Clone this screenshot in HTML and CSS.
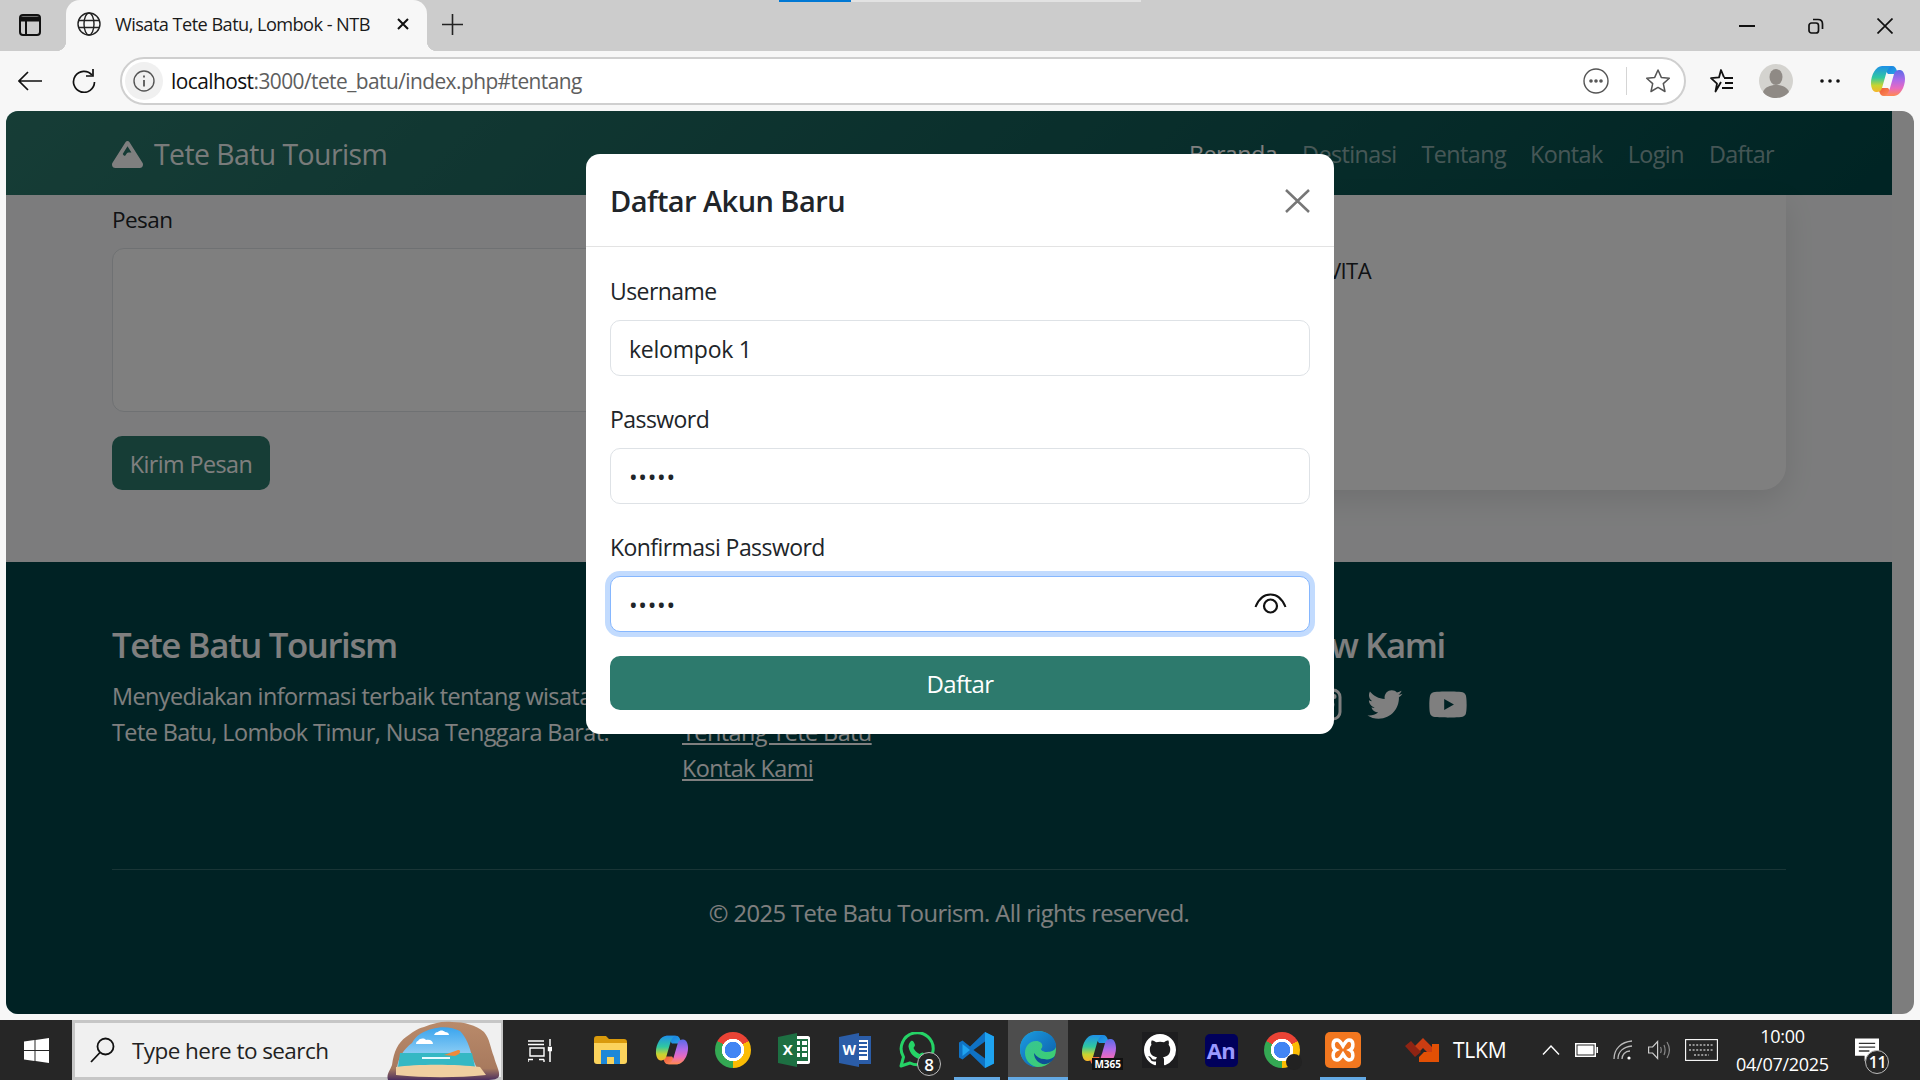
FILE: index.html
```html
<!DOCTYPE html>
<html lang="id">
<head>
<meta charset="utf-8">
<title>Wisata Tete Batu, Lombok - NTB</title>
<link rel="stylesheet" href="styles.css">
</head>
<body>
<svg class="defs" width="0" height="0" aria-hidden="true">
  <defs>
    <linearGradient id="cpL" x1="0" y1="0" x2="0" y2="1"><stop offset="0" stop-color="#1e90e8"/><stop offset=".45" stop-color="#30c8a0"/><stop offset=".75" stop-color="#c8d430"/><stop offset="1" stop-color="#f7b52c"/></linearGradient>
    <linearGradient id="cpR" x1="0" y1="0" x2="0" y2="1"><stop offset="0" stop-color="#5a6be8"/><stop offset=".4" stop-color="#b06ae8"/><stop offset=".7" stop-color="#e86ac0"/><stop offset="1" stop-color="#ff8a50"/></linearGradient>
    <linearGradient id="cpT" x1="0" y1="0" x2="1" y2="1"><stop offset="0" stop-color="#1273de"/><stop offset="1" stop-color="#2fb4e8"/></linearGradient>
    <linearGradient id="cpD" x1="0" y1="0" x2="1" y2="1"><stop offset="0" stop-color="#e8442c"/><stop offset="1" stop-color="#ff9a60"/></linearGradient>
    <linearGradient id="edA" x1="0" y1="0" x2="1" y2="1"><stop offset="0" stop-color="#35c1a0"/><stop offset="1" stop-color="#3ed06a"/></linearGradient>
    <linearGradient id="edB" x1="0" y1="0" x2="1" y2="1"><stop offset="0" stop-color="#1b9de2"/><stop offset="1" stop-color="#0c59a4"/></linearGradient>
    <linearGradient id="sky" x1="0" y1="0" x2="0" y2="1"><stop offset="0" stop-color="#3aa5ee"/><stop offset="1" stop-color="#bfe6f8"/></linearGradient>
    <linearGradient id="cave" x1="0" y1="0" x2="0" y2="1"><stop offset="0" stop-color="#b98a6a"/><stop offset=".8" stop-color="#a87a5e"/><stop offset="1" stop-color="#4b2f5e"/></linearGradient>
    <symbol id="copilot" viewBox="0 0 36 36">
      <path d="M12 3h10c3 0 4 2 5 5l2 7c-1-3-3-4-5-4h-6z" fill="url(#cpT)"/>
      <path d="M24 33H14c-3 0-4-2-5-5l-2-7c1 3 3 4 5 4h6z" fill="url(#cpD)"/>
      <path d="M12 3h10c-3 1-5 4-6 8l-4 14c-1 3-3 4-5 4H6C3 29 1 25 1 20 1 12 6 3 12 3z" fill="url(#cpL)"/>
      <path d="M24 33H14c3-1 5-4 6-8l4-14c1-3 3-4 5-4h1c3 0 5 4 5 9 0 8-5 17-11 17z" fill="url(#cpR)"/>
    </symbol>
  </defs>
</svg>

<header class="tabstrip">
  <span class="progress"><span class="progress-fill"></span></span>
  <span class="tab-side">
    <svg width="22" height="22" viewBox="0 0 22 22" fill="none" stroke="#111" stroke-width="2"><rect x="1" y="1" width="20" height="20" rx="3"/><path d="M1 5h20" stroke-width="5"/><path d="M7 6v15"/></svg>
  </span>
  <div class="tab">
    <svg class="tab-globe" width="24" height="24" viewBox="0 0 24 24" fill="none" stroke="#222" stroke-width="1.4"><circle cx="12" cy="12" r="11"/><ellipse cx="12" cy="12" rx="5" ry="11"/><path d="M1.5 8.5h21M1.5 15.5h21"/></svg>
    <span class="tab-title">Wisata Tete Batu, Lombok - NTB</span>
    <svg class="tab-close" width="14" height="14" viewBox="0 0 14 14" stroke="#111" stroke-width="2"><path d="M2 2l10 10M12 2L2 12"/></svg>
  </div>
  <svg class="tab-plus" width="21" height="21" viewBox="0 0 21 21" stroke="#222" stroke-width="1.6"><path d="M10.5 0v21M0 10.5h21"/></svg>
  <div class="win-controls">
    <svg width="16" height="16" viewBox="0 0 16 16" stroke="#111" stroke-width="2"><path d="M0 8h16"/></svg>
    <svg width="16" height="16" viewBox="0 0 16 16" fill="none" stroke="#111" stroke-width="1.7"><rect x="1" y="5" width="9.500" height="10" rx="2.500"/><path d="M5 1.500h5c3 0 4.500 1.500 4.500 4.500v5"/></svg>
    <svg width="16" height="16" viewBox="0 0 16 16" stroke="#111" stroke-width="1.700"><path d="M0.500 0.500l15 15M15.500 0.500l-15 15"/></svg>
  </div>
</header>

<nav class="toolbar">
  <svg class="tool-back" width="24" height="20" viewBox="0 0 24 20" fill="none" stroke="#111" stroke-width="1.700"><path d="M24 10H1M10 1l-9 9 9 9"/></svg>
  <svg class="tool-reload" width="25" height="24" viewBox="0 0 25 24" fill="none" stroke="#111" stroke-width="1.700"><path d="M20 6a10.500 10.500 0 1 0 2.500 7"/><path d="M21 0v7h-7"/></svg>
  <div class="addressbar">
    <span class="site-info"><svg width="22" height="22" viewBox="0 0 22 22" fill="none" stroke="#555" stroke-width="1.400"><circle cx="11" cy="11" r="10"/><path d="M11 10v6.500M11 5.500v2" stroke-width="1.800"/></svg></span>
    <span class="url"><span class="url-host">localhost</span>:3000/tete_batu/index.php#tentang</span>
    <svg class="addr-more" width="26" height="26" viewBox="0 0 26 26" fill="none" stroke="#555" stroke-width="1.400"><circle cx="13" cy="13" r="12"/><circle cx="8" cy="13" r="1.100" fill="#555"/><circle cx="13" cy="13" r="1.100" fill="#555"/><circle cx="18" cy="13" r="1.100" fill="#555"/></svg>
    <span class="addr-divider"></span>
    <svg class="addr-star" width="26" height="26" viewBox="0 0 26 26" fill="none" stroke="#555" stroke-width="1.500"><path d="M13 2l3.300 7.400 8 .8-6 5.400 1.700 7.900L13 19.400l-7 4.100 1.700-7.900-6-5.400 8-.8z" stroke-linejoin="round"/></svg>
  </div>
  <svg class="tool-fav" width="26" height="26" viewBox="0 0 26 26" fill="none" stroke="#111" stroke-width="1.800"><path d="M13 14l-5.500 9.500 1.500-7.900-6-5.400 8-.8L13 2l3 7.400" stroke-linejoin="round"/><path d="M16 10h9M17 15h8M14 20h11"/></svg>
  <svg class="tool-avatar" width="34" height="34" viewBox="0 0 34 34"><circle cx="17" cy="17" r="17" fill="#d4d3cf"/><ellipse cx="17" cy="13" rx="6.500" ry="8" fill="#8f8a85"/><path d="M4 28c2-5 7-7 13-7s11 2 13 7c-3 4-8 6-13 6s-10-2-13-6z" fill="#8f8a85"/></svg>
  <svg class="tool-dots" width="20" height="4" viewBox="0 0 20 4" fill="#111"><circle cx="2" cy="2" r="1.800"/><circle cx="10" cy="2" r="1.800"/><circle cx="18" cy="2" r="1.800"/></svg>
  <svg class="tool-copilot" width="36" height="36"><use href="#copilot"/></svg>
</nav>

<div class="viewport">
  <div class="page">
    <div class="navbar">
      <a class="brand">
        <svg class="brand-icon" width="31" height="27" viewBox="0 32 512 448" preserveAspectRatio="none"><path fill="#fff" d="M256 32c12.500 0 24.100 6.400 30.800 17L503.400 394.400c5.600 8.900 8.600 19.200 8.600 29.700c0 30.900-25 55.900-55.900 55.900H55.900C25 480 0 455 0 424.100c0-10.500 3-20.800 8.600-29.700L225.200 49c6.600-10.600 18.300-17 30.800-17zm65 192L256 120.400 176.900 246.500l18.300 24.400c6.400 8.500 19.200 8.500 25.600 0l25.600-34.100c6-8.100 15.500-12.800 25.600-12.800h49z"/></svg>
        Tete Batu Tourism
      </a>
      <ul class="nav-links">
        <li class="nav-active">Beranda</li>
        <li>Destinasi</li>
        <li>Tentang</li>
        <li>Kontak</li>
        <li>Login</li>
        <li>Daftar</li>
      </ul>
    </div>

    <main class="contact">
      <form class="contact-form">
        <label class="contact-label">Pesan</label>
        <div class="contact-area"></div>
        <button class="contact-send" type="button">Kirim Pesan</button>
      </form>
      <aside class="contact-card">
        <p class="contact-card-line">VITA</p>
      </aside>
    </main>

    <footer class="footer">
      <div class="footer-grid">
        <div>
          <h3 class="footer-title">Tete Batu Tourism</h3>
          <p class="footer-text">Menyediakan informasi terbaik tentang wisata<br>Tete Batu, Lombok Timur, Nusa Tenggara Barat.</p>
        </div>
        <div>
          <h3 class="footer-title">Link Cepat</h3>
          <ul class="footer-links">
            <li><a>Destinasi Wisata</a></li>
            <li><a>Tentang Tete Batu</a></li>
            <li><a>Kontak Kami</a></li>
          </ul>
        </div>
        <div>
          <h3 class="footer-title">Follow Kami</h3>
          <div class="socials">
            <svg width="37" height="35" viewBox="0 0 320 512" fill="#fff"><path d="M279.140 288l14.220-92.660h-88.910v-60.130c0-25.350 12.420-50.060 52.240-50.060h40.420V6.260S260.430 0 225.360 0c-73.220 0-121.080 44.380-121.080 124.720v70.620H22.890V288h81.390v224h100.170V288z"/></svg>
            <svg width="31" height="35" viewBox="0 0 31 35" fill="none" stroke="#fff" stroke-width="3"><rect x="2" y="3" width="27" height="29" rx="7"/><circle cx="15.500" cy="17.500" r="6.500"/><circle cx="23" cy="9.500" r="1" fill="#fff"/></svg>
            <svg width="36" height="35" viewBox="0 0 512 512" fill="#fff"><path d="M459.370 151.716c.325 4.548.325 9.097.325 13.645 0 138.720-105.583 298.558-298.558 298.558-59.452 0-114.680-17.219-161.137-47.106 8.447.974 16.568 1.299 25.340 1.299 49.055 0 94.213-16.568 130.274-44.832-46.132-.975-84.792-31.188-98.112-72.772 6.498.974 12.995 1.624 19.818 1.624 9.421 0 18.843-1.300 27.614-3.573-48.081-9.747-84.143-51.980-84.143-102.985v-1.299c13.969 7.797 30.214 12.670 47.431 13.319-28.264-18.843-46.781-51.005-46.781-87.391 0-19.492 5.197-37.360 14.294-52.954 51.655 63.675 129.300 105.258 216.365 109.807-1.624-7.797-2.599-15.918-2.599-24.040 0-57.828 46.782-104.934 104.934-104.934 30.213 0 57.502 12.670 76.670 33.137 23.715-4.548 46.456-13.320 66.599-25.340-7.798 24.366-24.366 44.833-46.132 57.827 21.117-2.273 41.584-8.122 60.426-16.243-14.292 20.791-32.161 39.308-52.628 54.253z"/></svg>
            <svg width="40" height="35" viewBox="0 0 576 512" fill="#fff"><path d="M549.655 124.083c-6.281-23.650-24.787-42.276-48.284-48.597C458.781 64 288 64 288 64S117.220 64 74.629 75.486c-23.497 6.322-42.003 24.947-48.284 48.597-11.412 42.867-11.412 132.305-11.412 132.305s0 89.438 11.412 132.305c6.281 23.650 24.787 41.500 48.284 47.821C117.220 448 288 448 288 448s170.780 0 213.371-11.486c23.497-6.321 42.003-24.171 48.284-47.821 11.412-42.867 11.412-132.305 11.412-132.305s0-89.438-11.412-132.305zm-317.510 213.508V175.185l142.739 81.205-142.739 81.201z"/></svg>
          </div>
        </div>
      </div>
      <div class="footer-bottom">© 2025 Tete Batu Tourism. All rights reserved.</div>
    </footer>
  </div>
  <div class="scroll-gutter"></div>

  <div class="backdrop"></div>

  <section class="modal">
    <div class="modal-header">
      <h2 class="modal-title">Daftar Akun Baru</h2>
      <svg class="modal-close" width="25" height="24" viewBox="0 0 25 24" stroke="#777" stroke-width="2.500"><path d="M1 1l23 22M24 1L1 23"/></svg>
    </div>
    <div class="modal-body">
      <div class="field">
        <label class="field-label">Username</label>
        <input class="field-input" type="text" value="kelompok 1">
      </div>
      <div class="field">
        <label class="field-label">Password</label>
        <input class="field-input field-secret" type="password" value="12345">
      </div>
      <div class="field">
        <label class="field-label">Konfirmasi Password</label>
        <div class="field-wrap">
          <input class="field-input field-secret is-focused" type="password" value="12345">
          <svg class="eye" width="33" height="21" viewBox="0 0 33 21" fill="none" stroke="#111" stroke-width="2"><path d="M1.500 14C5 5 10 1.500 16.500 1.500S28 5 31.500 14"/><circle cx="16.500" cy="13" r="6.500" stroke-width="2.200"/></svg>
        </div>
      </div>
      <button class="submit" type="button">Daftar</button>
    </div>
  </section>
</div>

<footer class="taskbar">
  <span class="start"><svg width="25" height="25" viewBox="0 0 25 25" fill="#fff"><path d="M0 3.500l10.500-1.500v10H0zM11.500 2L25 0v12H11.500zM0 13h10.500v10L0 21.500zM11.500 13H25v12l-13.500-2z"/></svg></span>
  <div class="search">
    <svg class="search-icon" width="25" height="26" viewBox="0 0 25 26" fill="none" stroke="#111" stroke-width="1.800"><circle cx="15.500" cy="9.500" r="8"/><path d="M10 15.500L1 25"/></svg>
    <span class="search-text">Type here to search</span>
    <svg class="search-art" width="116" height="59" viewBox="0 0 116 59">
      <path d="M2 59C0 53 4 50 6 44 8 30 12 22 20 16 26 12 30 8 38 6 48 2 56 0 66 1 78 1 90 4 98 11 104 18 104 26 108 36 110 44 114 50 113 55 112 58 108 59 100 59z" fill="url(#cave)"/>
      <path d="M11 48C12 36 18 28 26 22 30 14 38 10 46 8 56 5 66 6 74 10 80 16 84 26 86 36L92 50H11z" fill="url(#sky)"/>
      <path d="M32 20c2-3 6-3 8-1 4-1 7 1 7 4H30c0-2 1-3 2-3zM52 11c2-2 5-2 7 0 2 0 4 1 4 3H48c1-2 2-3 4-3z" fill="#fff"/>
      <path d="M14 32h72l3 14H12z" fill="#35b8c4"/>
      <path d="M10 46c20-3 60-3 84 0l6 8c-30 3-60 3-90 0z" fill="#f0cfa0"/>
      <path d="M58 34l14-5c2 0 3 1 1 4l-4 2z" fill="#ef8a3a"/>
      <path d="M36 36h28v2H36z" fill="#e8fbff"/>
    </svg>
  </div>
  <span class="task-view"><svg width="24" height="24" viewBox="0 0 24 24" fill="none" stroke="#fff" stroke-width="1.400"><path d="M0 3h16M0 6.500h16M2 10h14v8H2zM0 21.500h5M11 21.500h5M0 21.500v3M16 21.500v3"/><path d="M22 1v7M22 13v11" stroke-width="1.500"/><path d="M20.500 9.500h3v3h-3z" fill="#fff"/></svg></span>

  <span class="app app-explorer"><svg width="33" height="28" viewBox="0 0 33 28"><path d="M0 3c0-2 1-3 3-3h9l3 3h15c2 0 3 1 3 3v3H0z" fill="#d99a0c"/><path d="M0 7h33v18c0 2-1 3-3 3H3c-2 0-3-1-3-3z" fill="#fbd35c"/><path d="M7 14h19v14H7z" fill="#1e88d8"/><path d="M13 21h7v7h-7z" fill="#fbd35c"/></svg></span>
  <span class="app"><svg width="34" height="36"><use href="#copilot"/></svg></span>
  <span class="app"><span class="chrome"></span></span>
  <span class="app"><svg width="32" height="34" viewBox="0 0 32 34"><path d="M11 3h19c1 0 2 1 2 2v24c0 1-1 2-2 2H11z" fill="#fff"/><path d="M15 6h15v22H15z" fill="#1d6f42"/><path d="M17 8h5v4h-5zM24 8h5v4h-5zM17 14h5v4h-5zM24 14h5v4h-5zM17 20h5v4h-5zM24 20h5v4h-5z" fill="#fff"/><path d="M0 4l19-4v34L0 30z" fill="#1d6f42"/><text class="app-letter" x="9.500" y="22" text-anchor="middle" font-size="15">X</text></svg></span>
  <span class="app"><svg width="32" height="34" viewBox="0 0 32 34"><path d="M13 3h19v28H13z" fill="#2b5da8"/><path d="M18 7h11v20H18z" fill="#fff"/><path d="M19 9h9v2h-9zM19 13h9v2h-9zM19 17h9v2h-9zM19 21h9v2h-9z" fill="#2b5da8"/><path d="M0 4l20-4v34L0 30z" fill="#2b5da8"/><text class="app-letter" x="10" y="22" text-anchor="middle" font-size="14">W</text></svg></span>
  <span class="app app-badged">
    <svg class="whatsapp" width="36" height="36" viewBox="0 0 36 36" fill="none"><path d="M2 34l2.500-9A16 16 0 1 1 11 31z" stroke="#25d366" stroke-width="3" stroke-linejoin="round"/><path d="M12 9c2-1 3 1 4 4 0 1-1 2-1.500 3 1.500 3 3 4.500 6 6 1-.5 2-1.500 3-1.500 3 1 5 2 4 4-1 2-3 3-5 3-7-1-12-6-13-13 0-2 1-4 2.500-5.500z" fill="#25d366"/></svg>
    <span class="badge">8</span>
  </span>
  <span class="app app-running"><svg width="36" height="36" viewBox="0 0 36 36"><path d="M26 0l9 4.500v27L26 36 11 21.500 3.500 27.500 0 25.500v-15L3.500 8.500 11 14.500z" fill="#0f72c4"/><path d="M26 0l9 4.500v27L26 36zM11 18L3.500 12v12z" fill="#1ea3f0"/><path d="M26 9.500v17L14.500 18z" fill="#262626"/></svg></span>
  <span class="app app-active"><svg width="36" height="36" viewBox="0 0 36 36"><circle cx="18" cy="18" r="18" fill="url(#edA)"/><path d="M0 18C0 6 9 0 18 0c9 0 16 5 18 13 1 6-4 8-9 8-4 0-6-2-6-3 3-3 1-8-5-8-7 0-11 6-11 12 0 7 5 12 11 14C7 36 0 28 0 18z" fill="url(#edB)"/><path d="M14 22c0 7 6 12 12 11 4-1 7-3 9-8-3 3-7 4-11 3-4 0-7-2-10-6z" fill="#0d4f96"/></svg></span>
  <span class="app app-m365"><svg width="36" height="36"><use href="#copilot"/></svg><span class="m365-tag">M365</span></span>
  <span class="app"><span class="github"><svg width="32" height="32" viewBox="0 0 16 16" fill="#fff"><path d="M8 0C3.580 0 0 3.580 0 8c0 3.540 2.290 6.530 5.470 7.590.4.070.55-.17.55-.38 0-.19-.01-.82-.01-1.490-2.010.37-2.530-.49-2.690-.94-.09-.23-.48-.94-.82-1.130-.28-.15-.68-.52-.01-.53.63-.01 1.080.58 1.230.82.72 1.210 1.870.87 2.330.66.070-.52.28-.87.51-1.070-1.780-.2-3.640-.89-3.640-3.950 0-.87.31-1.590.82-2.150-.08-.2-.36-1.020.08-2.120 0 0 .67-.21 2.200.82.64-.18 1.320-.27 2-.27.68 0 1.360.09 2 .27 1.530-1.040 2.200-.82 2.200-.82.44 1.100.16 1.920.08 2.120.51.56.82 1.270.82 2.150 0 3.070-1.870 3.750-3.650 3.950.29.25.54.73.54 1.480 0 1.070-.01 1.930-.01 2.200 0 .21.15.46.55.38A8.013 8.013 0 0016 8c0-4.420-3.580-8-8-8z"/></svg></span></span>
  <span class="app"><span class="animate">An</span></span>
  <span class="app app-badged"><span class="chrome"></span><span class="profile"></span></span>
  <span class="app app-running"><span class="xampp"><svg width="26" height="26" viewBox="0 0 26 26" fill="none" stroke="#fff" stroke-width="3.500"><path d="M7 3c-5 0-5 8-1 10-4 2-4 10 1 10 3 0 4-3 6-6 2 3 3 6 6 6 5 0 5-8 1-10 4-2 4-10-1-10-3 0-4 3-6 6-2-3-3-6-6-6z"/></svg></span></span>

  <span class="tray-network">
    <svg width="36" height="24" viewBox="0 0 36 24"><path d="M0 8l6-5 10 11-6 5z" fill="#8f2413"/><path d="M10 8l8-8 12 12-5 5-7-7-3 3z" fill="#cc3d12"/><path d="M14 24l20 0V6l-7 0v8l-8 0-5 5z" fill="#e25005"/></svg>
    <span class="tray-name">TLKM</span>
  </span>
  <span class="tray-icons">
    <svg width="18" height="10" viewBox="0 0 18 10" fill="none" stroke="#fff" stroke-width="1.400"><path d="M1 9.500l8-8.500 8 8.500"/></svg>
    <svg width="23" height="14" viewBox="0 0 23 14" fill="#fff"><path d="M0 0h21v14H0zM1.500 1.500v11h18v-11zM21.500 4H23v6h-1.500z"/><path d="M2.500 2.500h16v9h-16z"/></svg>
    <svg width="20" height="20" viewBox="0 0 20 20" fill="none" stroke="#bbb" stroke-width="1.300"><path d="M1 19C1 9 8 2 19 1M5 19c0-7 5-12 14-13M9 19c0-4 3-8 8-8"/><circle cx="16" cy="18" r="1.600" fill="#fff" stroke="none"/></svg>
    <svg width="22" height="20" viewBox="0 0 22 20" fill="none" stroke="#ccc" stroke-width="1.200"><path d="M0.600 7h4l5-5.500v17l-5-5.500h-4z"/><path d="M12.500 7c1 2 1 4 0 6M16 5c1.500 3.500 1.500 6.500 0 10M19 2c3 5 3 11 0 16" stroke="#888"/></svg>
    <svg width="33" height="22" viewBox="0 0 33 22" fill="none" stroke="#fff" stroke-width="1.100"><rect x=".6" y=".6" width="31.800" height="20.800"/><path d="M4 6h25M4 11h25M9 16h15" stroke-dasharray="2 1.600"/></svg>
  </span>
  <span class="clock"><span>10:00</span><span>04/07/2025</span></span>
  <span class="notify">
    <svg width="24" height="25" viewBox="0 0 25 25"><path d="M0 0h25v18H14l-4 6v-6H0z" fill="#fff"/><path d="M4 5h17M4 9h17M4 13h11" stroke="#333" stroke-width="1.400"/></svg>
    <span class="notify-badge">11</span>
  </span>
</footer>
</body>
</html>
```

FILE: styles.css
```css
* { box-sizing: border-box; }
html, body { margin: 0; height: 100%; }
body {
  width: 1920px;
  height: 1080px;
  overflow: hidden;
  display: flex;
  flex-direction: column;
  background: #f7f7f7;
  font-family: "Open Sans", "Noto Sans", sans-serif;
  letter-spacing: -0.035em;
  color: #212529;
}
h2, h3, p, ul { margin: 0; padding: 0; }
ul { list-style: none; }
svg { flex: none; display: block; }
.defs { position: absolute; }

/* tab strip */
.tabstrip {
  position: relative;
  height: 51px;
  flex: none;
  display: flex;
  align-items: center;
  background: #cccccc;
}
.progress {
  position: absolute;
  top: 0;
  left: 779px;
  width: 362px;
  height: 2px;
  background: #e2e2e2;
}
.progress-fill { display: block; width: 72px; height: 2px; background: #0078d4; }
.tab-side { width: 66px; padding-left: 19px; padding-bottom: 2px; }
.tab {
  position: relative;
  width: 361px;
  height: 51px;
  display: flex;
  align-items: center;
  padding: 0 17px 4px 11px;
  background: #f7f7f7;
  border-radius: 14px 14px 0 0;
}
.tab::before, .tab::after {
  content: "";
  position: absolute;
  bottom: 0;
  width: 10px;
  height: 10px;
}
.tab::before { left: -10px; background: radial-gradient(circle at 0 0, transparent 10px, #f7f7f7 10.500px); }
.tab::after { right: -10px; background: radial-gradient(circle at 100% 0, transparent 10px, #f7f7f7 10.500px); }
.tab-title { margin-left: 14px; flex: 1; font-size: 18.200px; color: #1a1a1a; white-space: nowrap; }
.tab-plus { margin-left: 15px; margin-bottom: 3px; }
.win-controls {
  margin-left: auto;
  display: flex;
  gap: 53px;
  padding-right: 27px;
}

/* toolbar */
.toolbar {
  height: 60px;
  flex: none;
  display: flex;
  align-items: center;
  padding-left: 18px;
  background: #f7f7f7;
}
.tool-reload { margin-left: 30px; }
.addressbar {
  margin-left: 23px;
  width: 1566px;
  height: 48px;
  display: flex;
  align-items: center;
  padding-left: 3px;
  background: #fff;
  border: 2px solid #cfcfcf;
  border-radius: 24px;
}
.site-info {
  width: 38px;
  height: 38px;
  display: flex;
  align-items: center;
  justify-content: center;
  background: #f0f0f0;
  border-radius: 50%;
}
.url { margin-left: 8px; font-size: 20.900px; color: #5e5e5e; white-space: nowrap; }
.url-host { color: #111; }
.addr-more { margin-left: auto; }
.addr-divider { width: 1px; height: 28px; margin: 0 18px 0 17px; background: #d5d5d5; }
.addr-star { margin-right: 13px; }
.tool-fav { margin-left: 22px; }
.tool-avatar { margin-left: 25px; }
.tool-dots { margin-left: 27px; }
.tool-copilot { margin-left: 30px; }

/* browser viewport */
.viewport {
  position: relative;
  flex: none;
  height: 903px;
  margin: 0 6px;
  display: flex;
  overflow: hidden;
  background: #fafafa;
  border-radius: 12px;
}
.page { flex: 1; display: flex; flex-direction: column; background: #f8f9fa; min-width: 0; }
.scroll-gutter { width: 22px; background: #fafafa; }

.navbar {
  height: 84px;
  flex: none;
  display: flex;
  align-items: center;
  justify-content: space-between;
  padding: 2px 106px 0;
  background: linear-gradient(135deg, #2d7a6d, #004848);
}
.brand {
  display: flex;
  align-items: center;
  gap: 11px;
  font-size: 28.400px;
  color: rgba(255, 255, 255, .95);
}
.nav-links { display: flex; font-size: 23.300px; color: rgba(255, 255, 255, .55); }
.nav-links li { padding: 0 12.500px; }
.nav-links li:nth-child(3) { padding-right: 11.500px; }
.nav-links li:last-child { padding-right: 12px; }
.nav-active { color: #fff; }

.contact {
  height: 367px;
  flex: none;
  display: grid;
  grid-template-columns: 818px 826px;
  gap: 30px;
  padding: 0 106px;
}
.contact-form { padding-top: 10px; }
.contact-label { display: block; height: 30px; font-size: 22.500px; line-height: 30px; }
.contact-area {
  height: 164px;
  margin-top: 13px;
  background: #fff;
  border: 1px solid #dee2e6;
  border-radius: 12px;
}
.contact-send {
  display: block;
  height: 54px;
  width: 158px;
  margin-top: 24px;
  padding: 2px 0 0;
  border: 0;
  border-radius: 10px;
  background: #2d7a6d;
  color: #fff;
  font: inherit;
  font-size: 23.300px;
  letter-spacing: inherit;
}
.contact-card {
  height: 295px;
  background: #fff;
  border-radius: 0 0 24px 24px;
  box-shadow: 0 10px 30px rgba(0, 0, 0, .1);
  padding: 60px 0 0 40px;
}
.contact-card-line { width: 371px; text-align: right; font-size: 22px; line-height: 30px; }

.footer {
  flex: 1;
  padding: 62px 106px 0;
  background: #004548;
  color: #fff;
}
.footer-grid { display: grid; grid-template-columns: 570px 575px 1fr; height: 245px; }
.footer-title { font-size: 34.800px; font-weight: 600; line-height: 42px; margin-bottom: 12px; letter-spacing: -0.04em; }
.footer-text { font-size: 23.400px; line-height: 36px; white-space: nowrap; }
.footer-links { font-size: 23.400px; line-height: 36px; }
.footer-links a { color: #fff; text-decoration: underline; }
.socials { display: flex; gap: 25px; margin: 21px 0 0 -8px; }
.footer-bottom {
  border-top: 1px solid rgba(255, 255, 255, .2);
  padding-top: 25px;
  text-align: center;
  font-size: 23.700px;
  line-height: 36px;
}

.backdrop { position: absolute; inset: 0; background: rgba(0, 0, 0, .5); }

/* modal */
.modal {
  position: absolute;
  top: 43px;
  left: 580px;
  width: 748px;
  background: #fff;
  border-radius: 14px;
}
.modal-header {
  height: 93px;
  display: flex;
  align-items: center;
  justify-content: space-between;
  padding: 0 24px;
  border-bottom: 1px solid #e3e3e3;
}
.modal-title { font-size: 29px; font-weight: 600; color: #212529; }
.modal-close { margin-top: 2px; }
.modal-body { display: flex; flex-direction: column; padding: 29px 24px 24px; }
.field { margin-bottom: 28px; }
.field:nth-child(3) { margin-bottom: 24px; }
.field-label { display: block; height: 30px; margin-bottom: 14px; font-size: 23px; line-height: 30px; }
.field-wrap { position: relative; }
.field-input {
  display: block;
  width: 100%;
  height: 56px;
  padding: 2px 18px 0;
  background: #fff;
  border: 1px solid #dee2e6;
  border-radius: 10px;
  font: inherit;
  font-size: 23px;
  letter-spacing: -0.01em;
  color: #212529;
  outline: none;
}
.field-secret { letter-spacing: 0.7px; }
.is-focused { border-color: #86b7fe; box-shadow: 0 0 0 5px #c2dbfe; }
.eye { position: absolute; right: 23px; top: 17px; }
.submit {
  height: 54px;
  border: 0;
  border-radius: 10px;
  background: #2d7a6d;
  color: #fff;
  font: inherit;
  font-size: 24px;
  letter-spacing: inherit;
}

/* taskbar */
.taskbar {
  margin-top: 6px;
  height: 60px;
  flex: none;
  display: flex;
  align-items: center;
  background: #262626;
  color: #fff;
}
.start { width: 72px; display: flex; justify-content: center; }
.search {
  position: relative;
  width: 431px;
  height: 60px;
  display: flex;
  align-items: center;
  padding-left: 15px;
  background: #f0f0f0;
  border: 3px solid #c6c6c6;
  border-right-width: 2px;
  color: #222;
}
.search-text { margin-left: 17px; font-size: 22.500px; white-space: nowrap; }
.search-art { position: absolute; right: -1px; bottom: -3px; }
.task-view { width: 74px; padding-left: 25px; }
.app {
  position: relative;
  width: 60px;
  height: 60px;
  margin-right: 1px;
  display: flex;
  align-items: center;
  justify-content: center;
  flex: none;
}
.app-explorer { margin-left: 3px; margin-right: 2px; }
.whatsapp { margin-left: 2px; }
.app-active { background: #4d4d4d; border-bottom: 3px solid #63a9e4; }
.app-running::after {
  content: "";
  position: absolute;
  left: 7px;
  right: 7px;
  bottom: 0;
  height: 3px;
  background: #63a9e4;
}
.app-letter { fill: #fff; font-weight: 700; font-family: "Open Sans", sans-serif; }
.chrome {
  display: block;
  width: 36px;
  height: 36px;
  border-radius: 50%;
  background:
    radial-gradient(circle, #4285f4 0 8px, #fff 8.500px 11px, transparent 11.500px),
    conic-gradient(#ea4335 0 60deg, #fbbc04 60deg 180deg, #34a853 180deg 300deg, #ea4335 300deg);
}
.badge {
  position: absolute;
  right: 5px;
  bottom: 4px;
  width: 24px;
  height: 24px;
  display: flex;
  align-items: center;
  justify-content: center;
  background: #262626;
  border: 1px solid #bbb;
  border-radius: 50%;
  font-size: 17px;
  font-weight: 600;
  letter-spacing: 0;
}
.m365-tag {
  position: absolute;
  right: 6px;
  bottom: 10px;
  padding: 0 2px;
  background: #111;
  font-size: 10px;
  line-height: 12px;
  font-weight: 700;
  letter-spacing: 0;
}
.github {
  width: 36px;
  height: 36px;
  display: flex;
  align-items: center;
  justify-content: center;
  background: #1d1d1f;
}
.animate {
  width: 33px;
  height: 33px;
  display: flex;
  align-items: center;
  justify-content: center;
  background: #00005b;
  border-radius: 5px;
  color: #9999ff;
  font-size: 22px;
  font-weight: 700;
}
.profile {
  position: absolute;
  right: 10px;
  bottom: 10px;
  width: 16px;
  height: 16px;
  background: #222;
  border-radius: 50%;
}
.xampp {
  width: 36px;
  height: 36px;
  display: flex;
  align-items: center;
  justify-content: center;
  background: #f2771f;
  border-radius: 5px;
}
.tray-network { display: flex; align-items: center; margin-left: 31px; gap: 12px; }
.tray-name { font-size: 21px; letter-spacing: -0.01em; }
.tray-icons { display: flex; align-items: center; margin-left: 36px; gap: 15px; }
.clock {
  width: 126px;
  margin-left: 1px;
  display: flex;
  flex-direction: column;
  align-items: center;
  gap: 7px;
  font-size: 18px;
  line-height: 21px;
  letter-spacing: -0.015em;
}
.notify { position: relative; margin-left: 10px; }
.notify-badge {
  position: absolute;
  left: 10px;
  top: 12px;
  width: 24px;
  height: 24px;
  display: flex;
  align-items: center;
  justify-content: center;
  background: #262626;
  border: 1px solid #bbb;
  border-radius: 50%;
  font-size: 16px;
  font-weight: 600;
}
```
